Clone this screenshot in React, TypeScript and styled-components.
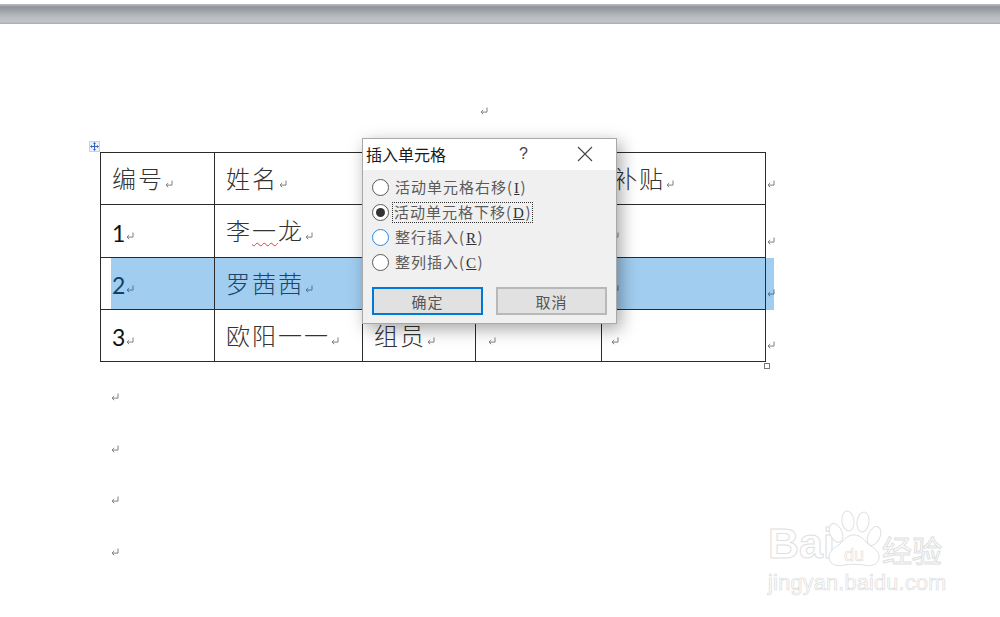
import React from "react";
import styled, { createGlobalStyle } from "styled-components";

const GlobalStyle = createGlobalStyle`
  html, body {
    margin: 0;
    padding: 0;
    background: #fff;
    overflow: hidden;
  }
  body {
    font-family: "Noto Sans CJK SC", "Liberation Sans", sans-serif;
  }
`;

const Page = styled.div`
  position: relative;
  width: 1000px;
  height: 617px;
  padding-top: 4px;
  box-sizing: border-box;
  overflow: hidden;
`;

const Ruler = styled.div`
  height: 20px;
  background: linear-gradient(#bcbec2 0%, #8f9298 15%, #a0a3a8 35%, #b6b9bd 60%, #c0c3c7 88%, #a9abaf 100%);
`;

const Doc = styled.div`
  padding: 72px 0 0 100px;
`;

const TopMark = styled.div`
  height: 56px;
  padding-left: 379px;
  & svg {
    margin-top: 10px;
  }
`;

const TableWrap = styled.div`
  position: relative;
  width: 674px;
`;

const Grid = styled.div`
  display: grid;
  grid-template-columns: 114px 148px 113px 126px 164px 9px;
  grid-template-rows: 53px 53px 52px 52px;
`;

const Cell = styled.div<{ $first?: boolean; $top?: boolean; $selected?: boolean }>`
  display: flex;
  align-items: center;
  box-sizing: border-box;
  padding: 0 0 3px 11px;
  border-left: 1px solid #2b2b2b;
  border-bottom: 1px solid #2b2b2b;
  border-top: ${({ $top }) => ($top ? "1px solid #2b2b2b" : "none")};
  color: ${({ $selected }) => ($selected ? "#1d4566" : "#333")};
  font-size: 24px;
  font-weight: 300;
  letter-spacing: 2px;
  background: ${({ $selected, $first }) =>
    !$selected
      ? "transparent"
      : $first
      ? "linear-gradient(90deg, #fff 10px, #a1cdf0 10px)"
      : "#a1cdf0"};
`;

const NumText = styled.span<{ $selected?: boolean }>`
  font-family: Lato, "Liberation Sans", sans-serif;
  font-size: 23px;
  font-weight: 400;
  letter-spacing: 0;
  margin-top: 6px;
  color: ${({ $selected }) => ($selected ? "#123f63" : "#111")};
`;

const Misspelt = styled.span`
  text-decoration: underline wavy #d9403a 1px;
  text-underline-offset: 2px;
`;

const EndCell = styled.div<{ $selected?: boolean; $head?: boolean }>`
  display: flex;
  align-items: center;
  box-sizing: border-box;
  padding-top: ${({ $head }) => ($head ? 11 : 18)}px;
  background: ${({ $selected }) => ($selected ? "#a1cdf0" : "transparent")};
  border-left: 1px solid #2b2b2b;
  & svg {
    margin-top: 0;
  }
`;

const MarkSvg = styled.svg<{ $dark?: boolean; $tight?: boolean }>`
  flex: none;
  width: 8px;
  height: 8px;
  margin: 13px 0 0 ${({ $tight }) => ($tight ? -2 : 1)}px;
  color: ${({ $dark }) => ($dark ? "#4f7391" : "#808080")};
`;

const Mark = ({ dark, tight }: { dark?: boolean; tight?: boolean }) => (
  <MarkSvg viewBox="0 0 8 8" $dark={dark} $tight={tight}>
    <path d="M7 0.5v4.6H1M3.2 3L1 5.1l2.2 2.1" fill="none" stroke="currentColor" strokeWidth="1" />
  </MarkSvg>
);

const MoveHandle = styled.div`
  position: absolute;
  left: -11px;
  top: -11px;
  width: 11px;
  height: 11px;
  box-sizing: border-box;
  background: #eef0f4;
  border: 1px solid #d0d0d0;
  display: flex;
  align-items: center;
  justify-content: center;
  color: #2f62c9;
`;

const ResizeHandle = styled.div`
  position: absolute;
  left: 664px;
  top: 211px;
  width: 4px;
  height: 4px;
  border: 1px solid #777;
  background: #fff;
`;

const EmptyLines = styled.div`
  display: flex;
  flex-direction: column;
  gap: 43.7px;
  padding: 31px 0 0 10px;
`;

const EmptyLine = styled.div`
  height: 8px;
  display: flex;
  & svg {
    margin-top: 0;
  }
`;

const Dialog = styled.div`
  position: absolute;
  left: 362px;
  top: 138px;
  width: 255px;
  height: 186px;
  box-sizing: border-box;
  border: 1px solid #a8a8a8;
  background: #f0f0f0;
  box-shadow: 4px 5px 16px rgba(0, 0, 0, 0.35);
  display: flex;
  flex-direction: column;
`;

const TitleBar = styled.div`
  height: 31px;
  flex: none;
  background: #fff;
  display: flex;
  align-items: center;
  padding: 0 0 1px 3px;
  box-sizing: border-box;
  color: #1a1a1a;
`;

const Title = styled.span`
  font-size: 16px;
  width: 153px;
`;

const Help = styled.span`
  font-family: "Liberation Sans", sans-serif;
  font-size: 16px;
  color: #444;
  width: 58px;
`;

const Body = styled.div`
  padding: 8px 9px 0;
  display: flex;
  flex-direction: column;
`;

const Options = styled.div`
  display: flex;
  flex-direction: column;
  gap: 7px;
`;

const Option = styled.div`
  display: flex;
  align-items: center;
  height: 18px;
  gap: 5px;
`;

const Radio = styled.span<{ $checked?: boolean; $hover?: boolean }>`
  flex: none;
  width: 17px;
  height: 17px;
  box-sizing: border-box;
  border-radius: 50%;
  background: #fff;
  border: 1px solid ${({ $hover }) => ($hover ? "#2e8bdc" : "#5a5a5a")};
  display: flex;
  align-items: center;
  justify-content: center;
  &::after {
    content: "";
    display: ${({ $checked }) => ($checked ? "block" : "none")};
    width: 9px;
    height: 9px;
    border-radius: 50%;
    background: #333;
  }
`;

const OptionLabel = styled.span<{ $focused?: boolean }>`
  font-size: 15px;
  letter-spacing: 1px;
  line-height: 18px;
  color: #5a5a5a;
  white-space: nowrap;
  padding: 0 0 0 1px;
  outline: ${({ $focused }) => ($focused ? "1px dotted #333" : "none")};
  margin-left: ${({ $focused }) => ($focused ? "-1px" : "0")};
  & u {
    font-family: "Liberation Serif", serif;
    letter-spacing: 0.5px;
    margin: 0 1px;
    color: #333;
  }
`;

const Buttons = styled.div`
  display: flex;
  justify-content: space-between;
  margin-top: 16px;
  width: 235px;
`;

const Button = styled.div<{ $primary?: boolean }>`
  width: 111px;
  height: 28px;
  box-sizing: border-box;
  display: flex;
  align-items: center;
  justify-content: center;
  background: #e1e1e1;
  border: 2px solid ${({ $primary }) => ($primary ? "#0078d7" : "#b8b8b8")};
  font-size: 15px;
  letter-spacing: 1px;
  color: #555;
`;

const Watermark = styled.div`
  position: absolute;
  left: 768px;
  top: 509px;
  width: 182px;
  color: #fff;
  -webkit-text-stroke: 1px #e0e0e0;
`;

const LogoRow = styled.div`
  display: flex;
  align-items: flex-end;
`;

const LogoBai = styled.span`
  font-family: "Liberation Sans", sans-serif;
  font-weight: 700;
  font-size: 43px;
  line-height: 44px;
  width: 58px;
  margin-bottom: 2px;
  white-space: nowrap;
`;

const LogoCn = styled.span`
  font-size: 30px;
  line-height: 36px;
  white-space: nowrap;
`;

const LogoUrl = styled.div`
  font-family: "Liberation Sans", sans-serif;
  font-size: 21.5px;
  line-height: 24px;
  letter-spacing: 0.3px;
  margin-top: 4px;
  white-space: nowrap;
  -webkit-text-stroke: 0.7px #dcdcdc;
`;

const Paw = () => (
  <svg width="56" height="58" viewBox="0 0 56 58" fill="#fff" stroke="#e0e0e0" strokeWidth="1" style={{ flex: "none" }}>
    <ellipse cx="10" cy="24" rx="6" ry="10" transform="rotate(-25 10 24)" />
    <ellipse cx="22" cy="12" rx="6" ry="10" transform="rotate(-8 22 12)" />
    <ellipse cx="37" cy="13" rx="6" ry="10" transform="rotate(8 37 13)" />
    <ellipse cx="48" cy="27" rx="6" ry="10" transform="rotate(25 48 27)" />
    <path d="M28 26c7 0 10 5 14 9 6 4 12 8 11 14-1 7-9 9-15 7-6-1-14-1-20 0-6 2-14 0-15-7-1-6 5-10 11-14 4-4 7-9 14-9z" />
    <text x="28" y="52" textAnchor="middle" fontFamily="Liberation Sans, sans-serif" fontSize="18" fill="#fff" strokeWidth="0.6">du</text>
  </svg>
);

const rows = [
  { num: "编号", isNum: false, name: "姓名", last: "补贴" },
  { num: "1", isNum: true, name: "李", wavy: "一", tail: "龙", last: "" },
  { num: "2", isNum: true, name: "罗茜茜", last: "", selected: true },
  { num: "3", isNum: true, name: "欧阳一一", last: "", role: "组员" },
];

const options = [
  { label: "活动单元格右移", key: "I" },
  { label: "活动单元格下移", key: "D", checked: true, focused: true },
  { label: "整行插入", key: "R", hover: true },
  { label: "整列插入", key: "C" },
];

export default function App() {
  return (
    <Page>
      <GlobalStyle />
      <Ruler />
      <Doc>
        <TopMark>
          <Mark />
        </TopMark>
        <TableWrap>
          <MoveHandle>
            <svg width="9" height="9" viewBox="0 0 9 9">
              <path d="M4.5 0L6 2H3zM4.5 9L3 7h3zM0 4.5L2 3v3zM9 4.5L7 6V3zM4 2h1v5H4zM2 4h5v1H2z" fill="currentColor" />
            </svg>
          </MoveHandle>
          <Grid>
            {rows.map((row, i) => {
              const sel = row.selected;
              const head = i === 0;
              return (
                <React.Fragment key={i}>
                  <Cell $first $top={head} $selected={sel}>
                    {row.isNum ? <NumText $selected={sel}>{row.num}</NumText> : row.num}
                    <Mark dark={sel} />
                  </Cell>
                  <Cell $top={head} $selected={sel}>
                    {row.name}
                    {row.wavy && <Misspelt>{row.wavy}</Misspelt>}
                    {row.tail}
                    <Mark dark={sel} />
                  </Cell>
                  <Cell $top={head} $selected={sel}>
                    {row.role}
                    {row.role && <Mark />}
                  </Cell>
                  <Cell $top={head} $selected={sel}>
                    {i === 3 && <Mark />}
                  </Cell>
                  <Cell $top={head} $selected={sel}>
                    {row.last}
                    <Mark dark={sel} tight={!row.last} />
                  </Cell>
                  <EndCell $selected={sel} $head={head}>
                    <Mark dark={sel} />
                  </EndCell>
                </React.Fragment>
              );
            })}
          </Grid>
          <ResizeHandle />
        </TableWrap>
        <EmptyLines>
          {[0, 1, 2, 3].map((n) => (
            <EmptyLine key={n}>
              <Mark />
            </EmptyLine>
          ))}
        </EmptyLines>
      </Doc>

      <Dialog>
        <TitleBar>
          <Title>插入单元格</Title>
          <Help>?</Help>
          <svg width="16" height="16" viewBox="0 0 16 16">
            <path d="M1 1l14 14M15 1L1 15" stroke="#444" strokeWidth="1.1" fill="none" />
          </svg>
        </TitleBar>
        <Body>
          <Options>
            {options.map((o) => (
              <Option key={o.key}>
                <Radio $checked={o.checked} $hover={o.hover} />
                <OptionLabel $focused={o.focused}>
                  {o.label}(<u>{o.key}</u>)
                </OptionLabel>
              </Option>
            ))}
          </Options>
          <Buttons>
            <Button $primary>确定</Button>
            <Button>取消</Button>
          </Buttons>
        </Body>
      </Dialog>

      <Watermark>
        <LogoRow>
          <LogoBai>Bai</LogoBai>
          <Paw />
          <LogoCn>经验</LogoCn>
        </LogoRow>
        <LogoUrl>jingyan.baidu.com</LogoUrl>
      </Watermark>
    </Page>
  );
}
